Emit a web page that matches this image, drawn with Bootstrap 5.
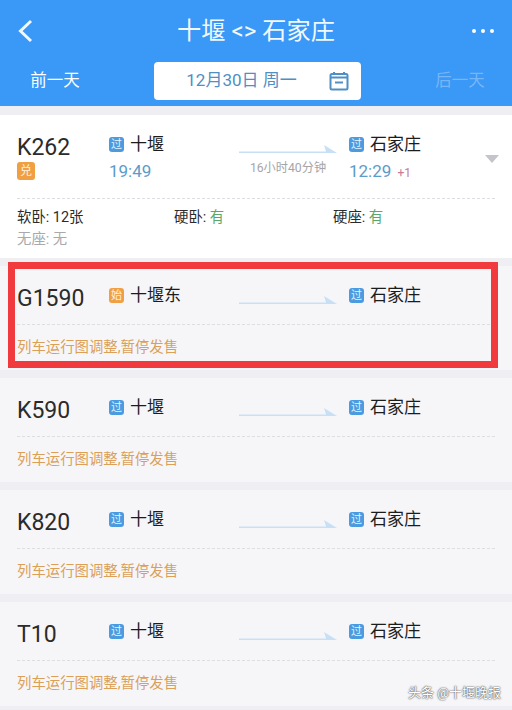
<!DOCTYPE html>
<html lang="zh-CN">
<head>
  <meta charset="UTF-8" />
  <meta name="viewport" content="width=device-width, initial-scale=1.0"/>
  <title>十堰 - 石家庄</title>
  <link href="https://cdn.jsdelivr.net/npm/bootstrap@5.3.0/dist/css/bootstrap.min.css" rel="stylesheet"/>
  <style>
    html, body { height: 710px; overflow: hidden; }
    body {
      position: relative;
      background: #eeeef3;
      font-family: "Roboto", "Noto Sans CJK SC", sans-serif;
      color: #2b2b2b;
    }
    .top-bar { background: #3a98f6; height: 106px; color: #fff; padding: 0 17px; }
    .title-row { height: 62px; }
    .title-side { width: 24px; }
    .title-text { font-size: 24.2px; line-height: 64px; color: #f2f8ff; }
    .date-row { height: 38px; }
    .day-link { width: 76px; text-align: center; font-size: 16.500px; }
    .day-off { color: #77b6f6; margin-right: -3px; }
    .date-box {
      width: 207px; height: 38px; background: #fff; border-radius: 4px;
      color: #4f8fc4; font-size: 17px;
    }
    .date-text { width: 175px; text-align: center; }
    .train-card { height: 104px; margin-top: 8px; background: #f6f6f9; padding: 0 17px; }
    .train-first { height: 143px; margin-top: 9px; background: #fff; }
    .first-row { height: 83px; padding-top: 17px; }
    .plain-row { height: 58px; padding-top: 17px; }
    .train-no { width: 92px; font-size: 23px; line-height: 28px; margin-top: 2px; }
    .stop-from { width: 130px; }
    .stop-mid { width: 110px; }
    .arrow-wrap { padding-top: 12px; }
    .stop-name { font-size: 17px; line-height: 24px; color: #1c1c1c; }
    .stop-time { font-size: 17px; line-height: 24px; color: #5c9cc9; margin-top: 3px; }
    .plus-day { font-size: 12px; color: #c9799a; margin-left: 2px; }
    .tag {
      display: inline-flex; align-items: center; justify-content: center;
      width: 15px; height: 15px; border-radius: 3px; color: #e8f3ff;
      font-size: 11px; line-height: 1; margin-right: 6px; vertical-align: 2px;
    }
    .tag-blue { background: #4a9be0; }
    .tag-orange { background: #f0a043; color: #fff0dc; }
    .tag-ticket { display: flex; width: 18px; height: 18px; margin: 0; font-size: 12px; }
    .duration { width: 98px; font-size: 12.200px; line-height: 16px; color: #a5a5a8; text-align: center; margin-top: 6px; white-space: nowrap; }
    .arrow-line { display: block; width: 98px; height: 10px; }
    .fold-mark {
      position: absolute; right: -4px; top: 40px; width: 0; height: 0;
      border-left: 7px solid transparent; border-right: 7px solid transparent; border-top: 8px solid #c4c4ca;
    }
    .dash-line { border-top: 1px dashed #dedee2; }
    .seat-row { font-size: 14.400px; line-height: 22px; padding-top: 8px; }
    .seat-cell { width: 157px; }
    .seat-cell-wide { width: 159px; }
    .seat-none { font-size: 14.400px; line-height: 22px; color: #a9a9ab; }
    .have { color: #5aa869; }
    .stop-note { font-size: 14.400px; line-height: 42px; padding-top: 2px; color: #dc9f58; }
    .red-frame {
      position: absolute; left: 8px; top: 262px; width: 490px; height: 106px;
      border: 7px solid #f03a3d; pointer-events: none;
    }
    .watermark {
      position: absolute; right: 11px; top: 684px; font-size: 13px; line-height: 18px; color: #fff;
      text-shadow: 0 0 2px #555, 0 0 1px #333;
    }
  </style>
</head>
<body>

<!-- 顶部 -->
<div class="top-bar">
  <div class="title-row d-flex justify-content-between align-items-center">
    <div class="title-side">
      <svg class="d-block" width="18" height="24" viewBox="0 0 18 24"><path d="M14 2 L3.500 12 L14 22" fill="none" stroke="#f2f8ff" stroke-width="3"/></svg>
    </div>
    <div class="title-text">十堰 &lt;&gt; 石家庄</div>
    <div class="title-side">
      <svg class="d-block" width="24" height="6" viewBox="0 0 24 6"><circle cx="3" cy="3" r="2" fill="#fff"/><circle cx="12" cy="3" r="2" fill="#fff"/><circle cx="21" cy="3" r="2" fill="#fff"/></svg>
    </div>
  </div>
  <div class="date-row d-flex justify-content-between align-items-center">
    <div class="day-link">前一天</div>
    <div class="date-box d-flex align-items-center">
      <div class="date-text">12月30日 周一</div>
      <svg width="20" height="20" viewBox="0 0 20 20"><rect x="1.500" y="3" width="17" height="15.500" rx="1.500" fill="none" stroke="#4f8fc4" stroke-width="2"/><path d="M1 6.500 H19" stroke="#4f8fc4" stroke-width="2"/><path d="M5 1 V4 M15 1 V4" stroke="#4f8fc4" stroke-width="2"/><path d="M6 11.500 H14" stroke="#4f8fc4" stroke-width="2"/></svg>
    </div>
    <div class="day-link day-off">后一天</div>
  </div>
</div>

<!-- 车次列表 -->
<div id="trainList"></div>

<div class="red-frame"></div>
<div class="watermark">头条 @十堰晚报</div>

<script>
  const arrow = `<svg class="arrow-line" viewBox="0 0 98 10"><path d="M0 7.500 H87 L85 1 L98 9 H0 Z" fill="#c8e0f5"/></svg>`;

  const trains = [
    { no: "G1590", from: "十堰东", tag: "始", tagClass: "tag-orange" },
    { no: "K590", from: "十堰", tag: "过", tagClass: "tag-blue" },
    { no: "K820", from: "十堰", tag: "过", tagClass: "tag-blue" },
    { no: "T10", from: "十堰", tag: "过", tagClass: "tag-blue" }
  ];

  const list = document.getElementById("trainList");

  list.innerHTML = `
    <div class="train-card train-first">
      <div class="first-row d-flex position-relative">
        <div class="train-no">K262<span class="tag tag-orange tag-ticket">兑</span></div>
        <div class="stop-from">
          <div class="stop-name"><span class="tag tag-blue">过</span>十堰</div>
          <div class="stop-time">19:49</div>
        </div>
        <div class="stop-mid">
          <div class="arrow-wrap">${arrow}</div>
          <div class="duration">16小时40分钟</div>
        </div>
        <div>
          <div class="stop-name"><span class="tag tag-blue">过</span>石家庄</div>
          <div class="stop-time">12:29 <span class="plus-day">+1</span></div>
        </div>
        <div class="fold-mark"></div>
      </div>
      <div class="dash-line"></div>
      <div class="seat-row d-flex">
        <div class="seat-cell">软卧: 12张</div>
        <div class="seat-cell-wide">硬卧: <span class="have">有</span></div>
        <div>硬座: <span class="have">有</span></div>
      </div>
      <div class="seat-none">无座: 无</div>
    </div>`;

  trains.forEach(t => {
    list.innerHTML += `
      <div class="train-card">
        <div class="plain-row d-flex">
          <div class="train-no">${t.no}</div>
          <div class="stop-from stop-name"><span class="tag ${t.tagClass}">${t.tag}</span>${t.from}</div>
          <div class="stop-mid arrow-wrap">${arrow}</div>
          <div class="stop-name"><span class="tag tag-blue">过</span>石家庄</div>
        </div>
        <div class="dash-line"></div>
        <div class="stop-note">列车运行图调整,暂停发售</div>
      </div>`;
  });
</script>

<script src="https://cdn.jsdelivr.net/npm/bootstrap@5.3.0/dist/js/bootstrap.bundle.min.js"></script>
</body>
</html>
